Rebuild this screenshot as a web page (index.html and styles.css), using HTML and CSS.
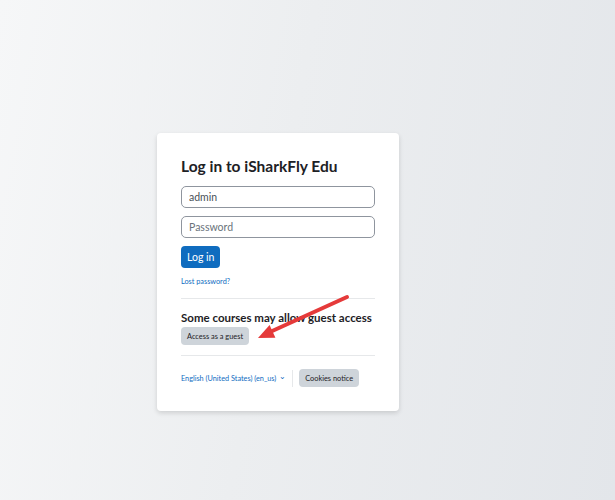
FILE: index.html
```html
<!DOCTYPE html>
<html>

<head>
    <meta charset="UTF-8">
    <meta name="viewport" content="width=device-width, initial-scale=1.0">
    <title>Log in to iSharkFly Edu</title>
    <link rel="stylesheet" href="styles.css">
</head>

<body>
    <div class="login-container">
        <h1>Log in to iSharkFly Edu</h1>
        <form class="login-form">
            <input type="text" class="form-input" value="admin">
            <input type="password" class="form-input" placeholder="Password">
            <button type="button" class="btn btn-primary">Log in</button>
        </form>
        <a class="lost-link" href="#">Lost password?</a>
        <hr class="divider">
        <h2>Some courses may allow guest access</h2>
        <button type="button" class="btn btn-secondary btn-small">Access as a guest</button>
        <hr class="divider">
        <div class="login-footer">
            <a class="lang-link" href="#">English (United States) (en_us) <span class="caret">&#8964;</span></a>
            <span class="footer-sep"></span>
            <button type="button" class="btn btn-secondary btn-small">Cookies notice</button>
        </div>
    </div>

    <!-- annotation arrow drawn over the page -->
    <svg class="annotation" width="615" height="500" viewBox="0 0 615 500">
        <line x1="347" y1="297" x2="270" y2="332" stroke="#e53a3a" stroke-width="4" stroke-linecap="round"/>
        <polygon points="258,338 269.6,324.9 275.4,337.7" fill="#e53a3a"/>
    </svg>
</body>

</html>
```

FILE: styles.css
```css
body {
    font-family: Lato, "Noto Sans", sans-serif;
    background: linear-gradient(100deg, #f6f7f8 0%, #eceef0 45%, #e3e6ea 100%);
    color: #1d2125;
    margin: 0;
    padding: 0;
    height: 500px;
    overflow: hidden;
}

.login-container {
    width: 194px;
    margin: 133px 0 0 157px;
    padding: 22px 24px 24px;
    background-color: #fff;
    border-radius: 4px;
    box-shadow: 0 2px 5px rgba(0, 0, 0, 0.14);
}

h1 {
    font-size: 15.5px;
    font-weight: bold;
    line-height: 22px;
    margin: 0 0 9px;
}

.login-form {
    display: flex;
    flex-direction: column;
    align-items: flex-start;
    gap: 8px;
}

.form-input {
    box-sizing: border-box;
    width: 100%;
    height: 22px;
    padding: 0 7px;
    border: 1px solid #8f959e;
    border-radius: 5px;
    font-family: inherit;
    font-size: 10.5px;
    color: #495057;
}

.form-input::placeholder {
    color: #6a737b;
}

.btn {
    display: block;
    font-family: inherit;
    border: none;
    border-radius: 4px;
    cursor: pointer;
    white-space: nowrap;
}

.btn-primary {
    height: 22px;
    padding: 0 6px;
    background-color: #0f6cbf;
    color: #fff;
    font-size: 10.5px;
}

.btn-secondary {
    background-color: #ced4da;
    color: #1d2125;
}

.btn-small {
    height: 18px;
    padding: 0 6px;
    font-size: 7.4px;
}

.lost-link {
    display: block;
    margin-top: 8px;
    font-size: 7.3px;
    line-height: 12px;
    color: #0f6cbf;
    text-decoration: none;
}

.divider {
    border: none;
    border-top: 1px solid #e6e8ea;
    margin: 10px 0 11px;
}

h2 {
    font-size: 11.5px;
    font-weight: bold;
    line-height: 15px;
    margin: 0 0 2px;
    white-space: nowrap;
}

.login-footer {
    display: flex;
    align-items: center;
    gap: 6px;
    margin-top: 13px;
    white-space: nowrap;
}

.lang-link {
    font-size: 7.3px;
    color: #0f6cbf;
    text-decoration: none;
}

.caret {
    display: inline-block;
    font-size: 8px;
    margin-left: 1px;
    transform: translateY(-2px);
}

.footer-sep {
    width: 1px;
    height: 17px;
    background-color: #e6e8ea;
}

.annotation {
    position: absolute;
    top: 0;
    left: 0;
    pointer-events: none;
}
```
